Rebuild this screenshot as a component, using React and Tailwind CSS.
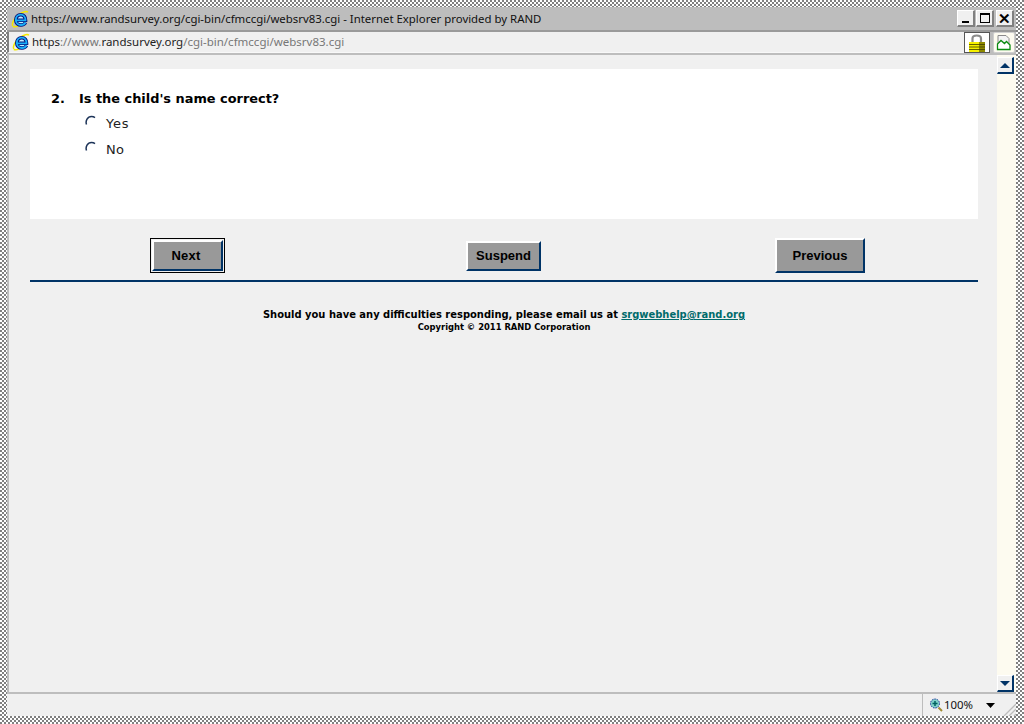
const IeIcon = () => (
  <svg width="18" height="18" viewBox="0 0 18 18" className="shrink-0">
    <path d="M1.800 15.800C.4 13.500 3.500 7.500 8 4.500c4-2.700 7.800-3.800 8.800-2.200" fill="none" stroke="#f4e800" strokeWidth="1.500" />
    <path d="M1.800 16.300c1.500 1 3.500.4 5.200-.5" fill="none" stroke="#f4e800" strokeWidth="1.500" />
    <circle cx="10" cy="9.500" r="5" fill="#bfeeff" />
    <path d="M4.800 10.300h9.700C14.500 7 12.700 4.700 9.800 4.700 6.800 4.700 4.800 7 4.800 10c0 3 2.200 5 5.200 5 2 0 3.600-.8 4.500-2.500" fill="none" stroke="#04107c" strokeWidth="3.600" />
    <path d="M4.800 10.300h9.700C14.500 7 12.700 4.700 9.800 4.700 6.800 4.700 4.800 7 4.800 10c0 3 2.200 5 5.200 5 2 0 3.600-.8 4.500-2.500" fill="none" stroke="#18b0f8" strokeWidth="1.800" />
  </svg>
);

const WinButton = ({ children, className = "" }) => (
  <div className={`w-[18px] h-[17px] flex items-center justify-center bg-[#f0f0f0] border-r-2 border-b-2 border-r-[#808080] border-b-[#808080] border-t border-l border-t-white border-l-white ${className}`}>
    {children}
  </div>
);

const LockIcon = () => (
  <svg width="20" height="20" viewBox="0 0 20 20">
    <path d="M5.500 10V5.500C5.500 1.500 14 1.500 14 5.500V10" fill="none" stroke="#8a8a8a" strokeWidth="2.200" />
    <rect x="2" y="9" width="16" height="10" fill="#f6f000" />
    <rect x="12" y="9" width="6" height="10" fill="#8f8a00" />
    <path d="M2 11.500h16M2 14h16M2 16.500h16" stroke="#3d3d00" strokeWidth="0.800" />
  </svg>
);

const ReportIcon = () => (
  <svg width="18" height="18" viewBox="0 0 18 18">
    <path d="M3 1.500h8l3 3V10H3z" fill="#f4f4f4" stroke="#8a8a8a" />
    <path d="M2.500 10l3.500-3.500 3.500 3 2-2 3.500 3.500v4.500H2.500z" fill="#fff" stroke="#0a8a10" strokeWidth="1.300" />
  </svg>
);

const ScrollButton = ({ down }) => (
  <div className="w-[17px] h-[17px] flex items-center justify-center bg-[#f0f0f0] border-t border-l border-t-white border-l-white border-r-2 border-b-2 border-r-[#003366] border-b-[#003366]">
    <svg width="10" height="5" viewBox="0 0 10 5">
      <path d={down ? "M0 0h10L5 5z" : "M0 5h10L5 0z"} fill="#003366" />
    </svg>
  </div>
);

const Radio = () => (
  <svg width="13" height="13" viewBox="0 0 13 13" className="shrink-0 -mt-[5px]">
    <path d="M1.500 9.500C.2 6 2.500 1.500 6.500 1.500c1.500 0 2.500.4 3.500 1.200" fill="none" stroke="#1c3358" strokeWidth="1.500" />
  </svg>
);

const SurveyButton = ({ label, className }) => (
  <button className={`bg-[#999999] text-[#000] font-bold text-[13px] pt-px font-['Liberation_Sans',sans-serif] border-t-2 border-l-2 border-t-white border-l-white border-r-2 border-b-2 border-r-[#003366] border-b-[#003366] ${className}`}>
    {label}
  </button>
);

export default function App() {
  return (
    <div className="w-[1024px] h-[724px] overflow-hidden flex flex-col pl-[7px] pr-[8px] pt-[7px] pb-[8px] bg-[repeating-conic-gradient(#808080_0_25%,#ffffff_0_50%)] bg-[length:4px_4px] font-['Noto_Sans',sans-serif]">
      {/* Title bar */}
      <div className="h-[23px] shrink-0 bg-[#bdbdbd] flex items-center pl-[4px] pr-[2px] gap-[2px]">
        <IeIcon />
        <div className="flex-1 text-[11.400px] text-[#111] whitespace-nowrap">
          https://www.randsurvey.org/cgi-bin/cfmccgi/websrv83.cgi - Internet Explorer provided by RAND
        </div>
        <div className="flex gap-[1px]">
          <WinButton><div className="w-[7px] h-[2px] mt-[7px] bg-black" /></WinButton>
          <WinButton><div className="w-[10px] h-[10px] border border-t-2 border-black" /></WinButton>
          <WinButton className="ml-[1px]"><span className="font-bold text-[15px] leading-none text-black font-['Liberation_Sans',sans-serif]">✕</span></WinButton>
        </div>
      </div>

      {/* Address bar */}
      <div className="h-[23px] shrink-0 border-t-2 border-t-[#9a9a9a] bg-[#bdbdbd] flex items-stretch">
        <div className="flex-1 flex items-center gap-[3px] pl-[3px] bg-[#f0f0f0] border-l-2 border-l-[#808080] border-b border-b-[#f8f8f8] text-[11.500px] whitespace-nowrap">
          <IeIcon />
          <span className="text-[#222] -ml-[1px]">
            https<span className="text-[#777]">://www.</span>randsurvey.org<span className="text-[#777]">/cgi-bin/cfmccgi/websrv83.cgi</span>
          </span>
        </div>
        <div className="w-[26px] flex items-center justify-center bg-white border border-[#555]">
          <LockIcon />
        </div>
        <div className="w-[22px] ml-[3px] mr-[1px] flex items-center justify-center bg-[#fdfbf0] border border-[#cfcfcf] rounded-[2px]">
          <ReportIcon />
        </div>
      </div>

      {/* Page + scrollbar */}
      <div className="flex-1 min-h-0 flex border-t-2 border-l-2 border-t-[#bdbdbd] border-l-[#bdbdbd] bg-[#f0f0f0]">
        <div className="flex-1 pl-[21px] pr-[19px] pt-[14px] font-['DejaVu_Sans',sans-serif]">
          <div className="h-[150px] bg-white pl-[21px] pt-[21px]">
            <div className="flex text-[12.900px] font-bold text-[#000] leading-[18px]">
              <span className="w-[28px]">2.</span>
              <span>Is the child's name correct?</span>
            </div>
            <div className="flex items-center gap-[8px] ml-[34px] mt-[3px] h-[26px] text-[13px] tracking-[0.800px] text-[#222]">
              <Radio />
              <span>Yes</span>
            </div>
            <div className="flex items-center gap-[8px] ml-[34px] h-[26px] text-[13px] tracking-[0.300px] text-[#222]">
              <Radio />
              <span>No</span>
            </div>
          </div>

          <div className="h-[63px] flex items-center border-b-2 border-b-[#003366] pt-[12px]">
            <div className="ml-[120px] p-px border border-black">
              <SurveyButton label="Next" className="block w-[71px] h-[31px] pr-[3px] tracking-[0.200px]" />
            </div>
            <SurveyButton label="Suspend" className="ml-[241px] w-[75px] h-[30px]" />
            <SurveyButton label="Previous" className="ml-[234px] w-[90px] h-[35px]" />
          </div>

          <div className="mt-[26px] text-center font-bold text-[#000]">
            <div className="text-[9.950px] leading-[13px]">
              Should you have any difficulties responding, please email us at{" "}
              <a href="#" className="text-[#006b6b] underline">srgwebhelp@rand.org</a>
            </div>
            <div className="text-[8.400px] leading-[12px]">Copyright © 2011 RAND Corporation</div>
          </div>
        </div>

        {/* Scrollbar */}
        <div className="w-[19px] shrink-0 flex flex-col justify-between items-start pt-[2px] bg-[#fdfbf0]">
          <ScrollButton />
          <ScrollButton down />
        </div>
      </div>

      {/* Status bar */}
      <div className="h-[24px] shrink-0 bg-[#f0f0f0] border-t-2 border-t-[#bdbdbd] flex justify-end">
        <div className="w-[94px] flex items-center border-l border-l-[#bdbdbd] pl-[6px] text-[11.400px] text-[#111] relative">
          <svg width="14" height="14" viewBox="0 0 14 14" className="shrink-0 mr-[1px]">
            <circle cx="6" cy="5.500" r="4.500" fill="#7fd0c8" stroke="#1a2a9a" strokeDasharray="1.500 1" />
            <path d="M6 3v5M3.500 5.500h5" stroke="#006060" strokeWidth="1.500" />
            <path d="M9.500 9.500L13 13" stroke="#a08a30" strokeWidth="2" />
          </svg>
          <span>100%</span>
          <svg width="9" height="5" viewBox="0 0 9 5" className="ml-[13px]">
            <path d="M0 0h9L4.500 5z" fill="#000" />
          </svg>
          <svg width="13" height="13" viewBox="0 0 13 13" className="absolute right-0 bottom-0">
            <path d="M1 13L13 1M6 13l7-7M11 13l2-2" stroke="#bdbdbd" strokeWidth="1.300" />
          </svg>
        </div>
      </div>
    </div>
  );
}
